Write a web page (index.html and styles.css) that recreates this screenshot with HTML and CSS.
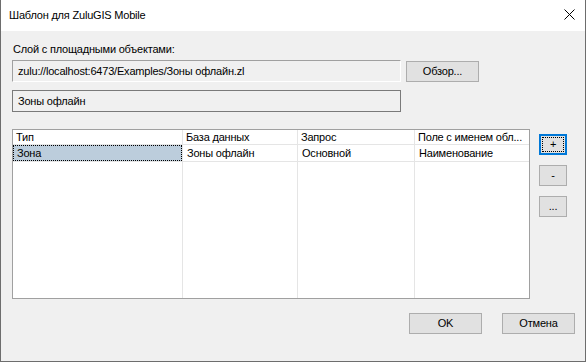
FILE: index.html
```html
<!DOCTYPE html>
<html lang="ru">
<head>
    <meta charset="UTF-8">
    <title>Шаблон для ZuluGIS Mobile</title>
    <link rel="stylesheet" href="styles.css">
</head>
<body>
    <div class="window">
        <!-- Title bar -->
        <div class="titlebar">
            <span class="title">Шаблон для ZuluGIS Mobile</span>
            <span class="close">
                <svg width="11" height="11" viewBox="0 0 11 11">
                    <path d="M0.5 0.5 L10.5 10.5 M10.5 0.5 L0.5 10.5" stroke="#000" stroke-width="1" fill="none"/>
                </svg>
            </span>
        </div>

        <div class="content">
            <div class="label">Слой с площадными объектами:</div>

            <div class="path-row">
                <div class="readonly-box">zulu://localhost:6473/Examples/Зоны офлайн.zl</div>
                <button class="btn browse">Обзор...</button>
            </div>

            <div class="name-box">Зоны офлайн</div>

            <div class="list-row">
                <div class="listview">
                    <div class="col col-type">
                        <div class="head">Тип</div>
                        <div class="cell selected"><span>Зона</span></div>
                    </div>
                    <div class="col col-db">
                        <div class="head">База данных</div>
                        <div class="cell">Зоны офлайн</div>
                    </div>
                    <div class="col col-query">
                        <div class="head">Запрос</div>
                        <div class="cell">Основной</div>
                    </div>
                    <div class="col col-field">
                        <div class="head">Поле с именем обл...</div>
                        <div class="cell">Наименование</div>
                    </div>
                </div>
                <div class="side-buttons">
                    <button class="btn small focused"><span>+</span></button>
                    <button class="btn small">-</button>
                    <button class="btn small">...</button>
                </div>
            </div>

            <div class="footer">
                <button class="btn action">OK</button>
                <button class="btn action">Отмена</button>
            </div>
        </div>
    </div>
</body>
</html>
```

FILE: styles.css
```css
* {
    margin: 0;
    padding: 0;
    box-sizing: border-box;
}

body {
    font-family: "Liberation Sans", Arial, sans-serif;
    font-size: 11px;
    letter-spacing: -0.2px;
    color: #000;
    background-color: #f0f0f0;
}

.window {
    width: 586px;
    height: 362px;
    background-color: #f0f0f0;
    border: 1px solid #6d6d6d;
    border-top: none;
    display: flex;
    flex-direction: column;
}

.titlebar {
    height: 31px;
    background-color: #fff;
    display: flex;
    align-items: center;
    justify-content: space-between;
    padding-left: 8px;
    padding-right: 10px;
}

.title {
    font-size: 11px;
    margin-top: -1px;
}

.close {
    display: flex;
    margin-top: -2px;
}

.content {
    padding: 0 10px 0 11px;
}

.label {
    margin-top: 11px;
    height: 15px;
    line-height: 15px;
    padding-left: 1px;
}

.path-row {
    display: flex;
    align-items: flex-start;
    margin-top: 3px;
}

.readonly-box {
    width: 389px;
    height: 22px;
    padding: 3px 5px;
    border: 1px solid #a0a0a0;
    border-right-color: #fff;
    border-bottom-color: #fff;
    line-height: 15px;
}

.btn {
    font-family: "Liberation Sans", Arial, sans-serif;
    font-size: 11px;
    letter-spacing: -0.2px;
    color: #000;
    background-color: #e1e1e1;
    border: 1px solid #adadad;
    height: 21px;
    line-height: 17px;
}

.browse {
    width: 73px;
    margin: 1px 0 0 5px;
}

.name-box {
    width: 389px;
    height: 22px;
    margin-top: 8px;
    padding: 3px 5px;
    border: 1px solid #7a7a7a;
    line-height: 15px;
}

.list-row {
    display: flex;
    align-items: flex-start;
    margin-top: 17px;
}

.listview {
    width: 518px;
    height: 170px;
    border: 1px solid #a0a0a0;
    background-color: #fff;
    display: flex;
}

.col {
    flex: none;
    border-right: 1px solid #e5e5e5;
}

.col-type {
    width: 170px;
}

.col-db {
    width: 115px;
}

.col-query {
    width: 117px;
}

.col-field {
    flex: 1;
    min-width: 0;
    border-right: none;
}

.head,
.cell {
    padding-left: 3px;
    border-bottom: 1px solid #e5e5e5;
    white-space: nowrap;
}

.head {
    height: 15px;
    line-height: 14px;
}

.cell {
    height: 17px;
    line-height: 16px;
    padding-left: 4px;
}

.cell.selected {
    padding: 0;
}

.cell.selected span {
    display: block;
    height: 16px;
    line-height: 14px;
    padding-left: 3px;
    background-color: #bccddc;
    border: 1px dotted #000;
}

.side-buttons {
    display: flex;
    flex-direction: column;
    gap: 10px;
    margin: 5px 0 0 9px;
}

.small {
    width: 28px;
}

.focused {
    border: 2px solid #0078d7;
    padding: 1px;
    line-height: 13px;
}

.focused span {
    display: block;
    height: 15px;
    border: 1px dotted #000;
}

.footer {
    display: flex;
    justify-content: flex-end;
    gap: 20px;
    margin-top: 14px;
}

.action {
    width: 73px;
}
```
